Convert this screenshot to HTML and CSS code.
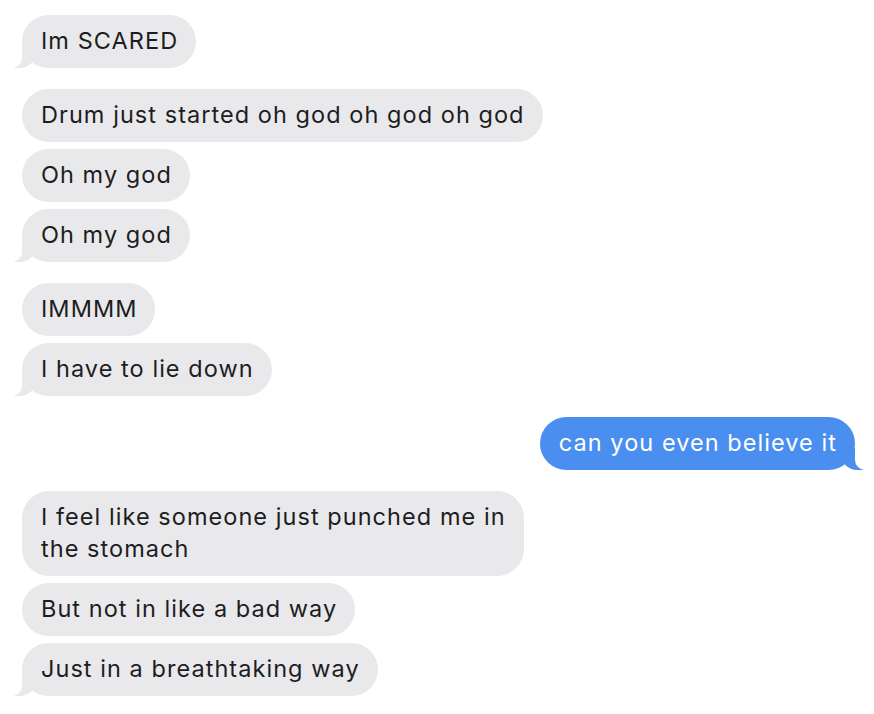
FILE: index.html
```html
<!DOCTYPE html>
<html>
<head>
<meta charset="utf-8">
<link rel="stylesheet" href="styles.css">
</head>
<body>
<div class="thread">
  <div class="group">
    <div class="bubble in tail">Im SCARED</div>
  </div>
  <div class="group">
    <div class="bubble in">Drum just started oh god oh god oh god</div>
    <div class="bubble in">Oh my god</div>
    <div class="bubble in tail">Oh my god</div>
  </div>
  <div class="group">
    <div class="bubble in">IMMMM</div>
    <div class="bubble in tail">I have to lie down</div>
  </div>
  <div class="group out-group">
    <div class="bubble out tail">can you even believe it</div>
  </div>
  <div class="group">
    <div class="bubble in">I feel like someone just punched me in<br>the stomach</div>
    <div class="bubble in">But not in like a bad way</div>
    <div class="bubble in tail">Just in a breathtaking way</div>
  </div>
</div>
</body>
</html>
```
FILE: styles.css
```css
html, body {
  margin: 0;
  padding: 0;
  background: #ffffff;
}
.thread {
  display: flex;
  flex-direction: column;
  gap: 21px;
  padding: 15px 19px 0 22px;
  font-family: "Inter", "Liberation Sans", sans-serif;
  font-size: 23.5px;
  letter-spacing: 1.05px;
}
.group {
  display: flex;
  flex-direction: column;
  align-items: flex-start;
  gap: 7px;
}
.out-group {
  align-items: flex-end;
}
.bubble {
  position: relative;
  padding: 10px 18px 11px 19px;
  line-height: 32px;
  border-radius: 27px;
}
.in {
  background: #e9e9eb;
  color: #1d1d1f;
}
.out {
  background: #4a8ff0;
  color: #ffffff;
}
.in.tail::before {
  content: "";
  position: absolute;
  bottom: 0;
  left: -8px;
  width: 22px;
  height: 22px;
  background: #e9e9eb;
  border-bottom-right-radius: 16px;
}
.in.tail::after {
  content: "";
  position: absolute;
  bottom: 0;
  left: -12px;
  width: 12px;
  height: 22px;
  background: #ffffff;
  border-bottom-right-radius: 10px;
}
.out.tail::before {
  content: "";
  position: absolute;
  bottom: 0;
  right: -8px;
  width: 22px;
  height: 22px;
  background: #4a8ff0;
  border-bottom-left-radius: 16px;
}
.out.tail::after {
  content: "";
  position: absolute;
  bottom: 0;
  right: -12px;
  width: 12px;
  height: 22px;
  background: #ffffff;
  border-bottom-left-radius: 10px;
}
```
